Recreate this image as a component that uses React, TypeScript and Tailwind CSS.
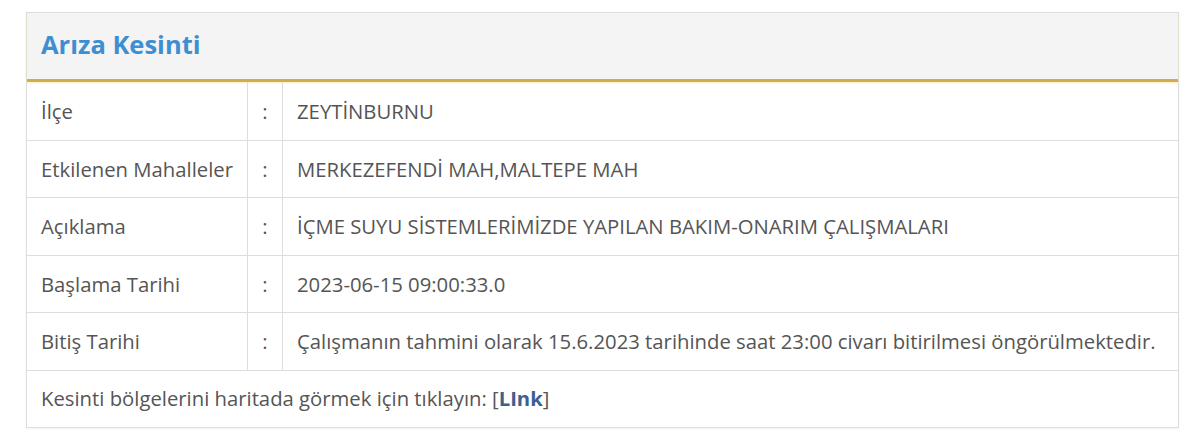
import React from 'react';

const rows: { label: string; value: string }[] = [
  { label: 'İlçe', value: 'ZEYTİNBURNU' },
  { label: 'Etkilenen Mahalleler', value: 'MERKEZEFENDİ MAH,MALTEPE MAH' },
  { label: 'Açıklama', value: 'İÇME SUYU SİSTEMLERİMİZDE YAPILAN BAKIM-ONARIM ÇALIŞMALARI' },
  { label: 'Başlama Tarihi', value: '2023-06-15 09:00:33.0' },
  {
    label: 'Bitiş Tarihi',
    value: 'Çalışmanın tahmini olarak 15.6.2023 tarihinde saat 23:00 civarı bitirilmesi öngörülmektedir.',
  },
];

export default function App() {
  return (
    <div className="w-[1200px] h-[447px] bg-white pt-[12px] pl-[26px] font-['Open_Sans','Noto_Sans',sans-serif]">
      <div className="w-[1153px] border border-[#dddddd] shadow-[0_1px_2px_rgba(0,0,0,0.05)]">
        {/* header */}
        <div className="h-[69px] bg-[#f5f4f4] flex items-center px-[14px] border-b-[3px] border-[#d4ab4c] shadow-[0_1px_2px_rgba(250,220,120,0.5)]">
          <h2 className="text-[25.5px] font-bold text-[#3e8fd2] mt-[-3px]">Arıza Kesinti</h2>
        </div>

        {rows.map((r, i) => (
          <div
            key={i}
            className={`grid grid-cols-[221px_35px_1fr] h-[57.5px] text-[20.3px] text-[#555555] ${i === 0 ? '' : 'border-t border-[#dddddd]'}`}
          >
            <div className="flex items-center px-[14px] border-r border-[#dddddd]">{r.label}</div>
            <div className="flex items-center justify-center border-r border-[#dddddd]">:</div>
            <div className="flex items-center px-[14px]">{r.value}</div>
          </div>
        ))}

        <div className="h-[57px] flex items-center px-[14px] border-t border-[#dddddd] text-[20.3px] text-[#555555]">
          Kesinti bölgelerini haritada görmek için tıklayın:&nbsp;[<a className="font-bold text-[#3d5f91]">LInk</a>]
        </div>
      </div>
    </div>
  );
}
